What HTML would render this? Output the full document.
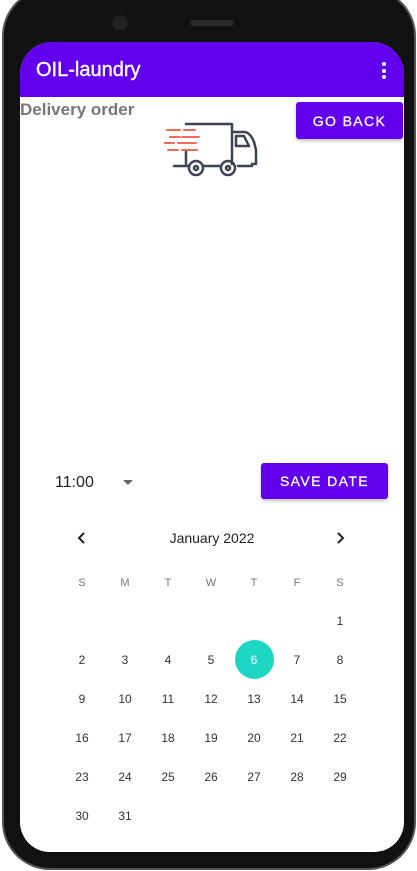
<!DOCTYPE html>
<html><head><meta charset="utf-8"><style>
body{margin:0;width:417px;height:871px;background:#fff;position:relative;overflow:hidden;font-family:"Liberation Sans",Roboto,sans-serif}
.frame{position:absolute;left:4px;top:-10px;width:410px;height:878px;background:#111;border-radius:46px;box-shadow:0 0 0 2px #555}
.screen{position:absolute;left:20px;top:42px;width:384px;height:810px;background:#fff;border-radius:32px 32px 30px 30px;overflow:hidden}
.bar{position:absolute;left:0;top:0;width:384px;height:55px;background:#6200ee;color:#fff}
.title{position:absolute;left:16px;top:17px;font-size:20px;-webkit-text-stroke:0.4px #fff}
.dots{position:absolute;right:18px;top:20px;width:4px}
.dots i{display:block;width:4px;height:4px;background:#fff;border-radius:2px;margin-bottom:2.5px}
.btn{position:absolute;background:#6200ee;color:#fff;font-size:14px;letter-spacing:1.4px;display:flex;align-items:center;justify-content:center;border-radius:3px;box-shadow:0 2px 3px rgba(0,0,0,.25);-webkit-text-stroke:0.3px #fff}
.abs{position:absolute}
.d{position:absolute;width:40px;margin-left:-20px;text-align:center;font-size:12px;color:#333}
.h{color:#777;font-size:11px}
</style></head><body>
<div class="frame"></div>
<div class="abs" style="left:112px;top:15px;width:16px;height:16px;border-radius:8px;background:#222"></div>
<div class="abs" style="left:190px;top:20px;width:44px;height:6px;border-radius:3px;background:#2a2a2a"></div>
<div class="screen">
<div class="bar"><div class="title">OIL-laundry</div><div class="dots"><i></i><i></i><i></i></div></div>
<div class="abs" style="left:0;top:58px;font-size:17px;font-weight:bold;color:#777">Delivery order</div>
<div class="btn" style="left:276px;top:60px;width:107px;height:37px">GO BACK</div>
<svg class="abs" style="left:144px;top:78px" width="96" height="60" viewBox="0 0 96 60">
<g stroke="#3c4452" stroke-width="2.5" fill="none" stroke-linecap="round" stroke-linejoin="round">
<path d="M22 4H68V44"/><path d="M22 30V44"/><path d="M68 12H80Q86 12 90 22L92 30V44H88"/>
<path d="M72 16H80L85 26H72Z"/><path d="M10 46H24M40 46H56M74 46H88"/>
<circle cx="32" cy="48" r="7"/><circle cx="64" cy="48" r="7"/><circle cx="32" cy="48" r="2"/><circle cx="64" cy="48" r="2"/>
</g>
<g stroke="#ee6a5a" stroke-width="2" stroke-linecap="round">
<path d="M3 10H16M20 10H31M6 17H16M18 17H35M0 23H10M14 23H32M4 30H14M18 30H33"/></g></svg>
<div class="abs" style="left:35px;top:432px;font-size:16px;color:#222">11:00</div>
<div class="abs" style="left:103px;top:438px;border-left:5px solid transparent;border-right:5px solid transparent;border-top:5px solid #666"></div>
<div class="btn" style="left:241px;top:421px;width:127px;height:36px">SAVE DATE</div>
<div class="abs" style="left:0;top:488px;width:384px;text-align:center;font-size:14px;color:#222">January 2022</div>
<svg class="abs" style="left:57px;top:489px" width="10" height="14"><path d="M7 2L2 7L7 12" stroke="#222" stroke-width="2" fill="none"/></svg>
<svg class="abs" style="left:315px;top:489px" width="10" height="14"><path d="M3 2L8 7L3 12" stroke="#222" stroke-width="2" fill="none"/></svg>
<div class="abs" style="left:215px;top:598px;width:39px;height:39px;border-radius:50%;background:#1ed6c4"></div>
<div id="cal"></div>
</div>
<script>
var c=document.getElementById('cal'),xs=[62,105,148,191,234,277,320],h='',hd='SMTWTFS';
for(var i=0;i<7;i++)h+='<div class="d h" style="left:'+xs[i]+'px;top:535px">'+hd[i]+'</div>';
var rows=[572,611,650,689,728,767];
for(var d=1;d<=31;d++){var p=d+5,r=Math.floor(p/7),col=p%7;
h+='<div class="d" style="left:'+xs[col]+'px;top:'+rows[r]+'px;'+(d==6?'color:#fff':'')+'">'+d+'</div>';}
c.innerHTML=h;
</script>
</body></html>
